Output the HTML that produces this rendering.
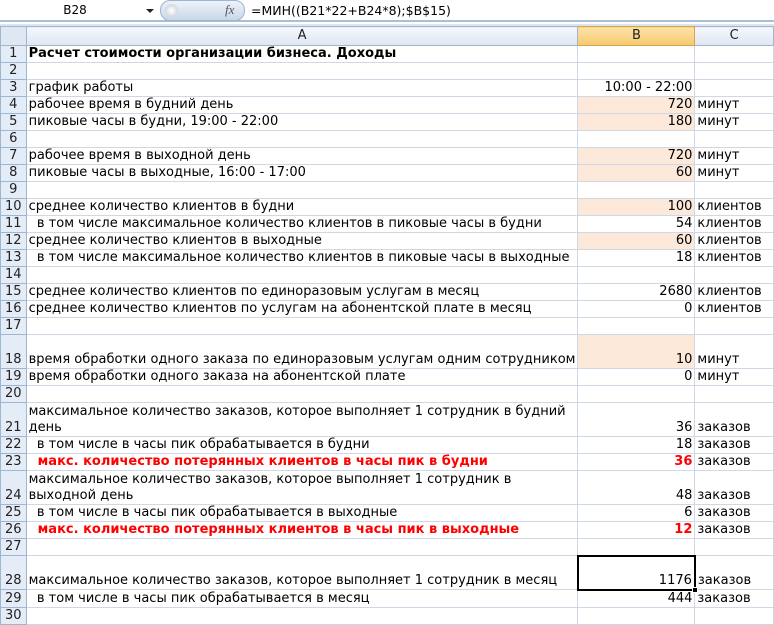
<!DOCTYPE html>
<html><head><meta charset="utf-8"><style>
*{margin:0;padding:0;box-sizing:border-box}
body{width:774px;height:611px;overflow:hidden;background:#fff;font-family:"DejaVu Sans","Liberation Sans",sans-serif;font-size:13px;color:#000;position:relative}
#fb{position:absolute;left:0;top:0;width:774px;height:22px;background:#fff;border-bottom:2px solid #a9bfd6}
#fb .nb{position:absolute;left:0;top:0;width:160px;height:21px;text-align:center;line-height:21px;padding-right:10px;font-size:12px}
#fb .arr{position:absolute;left:146px;top:9px;border-left:4px solid transparent;border-right:4px solid transparent;border-top:4px solid #222}
#fb .oval{position:absolute;left:160px;top:0;width:85px;height:21px;border-radius:10px;background:linear-gradient(#eef3fa,#c8d7ea);border:1px solid #9fb4cf}
#fb .oval i{position:absolute;left:4px;top:3px;width:13px;height:13px;border-radius:50%;background:radial-gradient(#fff,#c0c8d2);}
#fb .fx{position:absolute;left:225px;top:2px;font-family:"Liberation Serif",serif;font-style:italic;font-size:13px;color:#555}
#fb .f{position:absolute;left:251px;top:0;line-height:21px;font-size:12.5px}
#strip{position:absolute;left:0;top:24px;width:774px;height:2px;background:#dbe5f1}
table{position:absolute;left:0;top:26px;border-collapse:collapse;table-layout:fixed}
td{border:1px solid #d0d7e5;white-space:nowrap;overflow:visible;vertical-align:bottom;padding:0 2px;line-height:16px}
td.h{background:linear-gradient(#f4f7fb,#dfe7f2);border-color:#9eb6ce;text-align:center;color:#222;vertical-align:middle}
td.r{background:#e4ecf7;border-color:#9eb6ce;text-align:center;color:#222;padding:0}
td.hb{background:linear-gradient(#fbe2a8,#f8c96e);border-color:#d8a546}
td.b{text-align:right}
.o{background:#fde9d9}
.red{color:#f00;font-weight:bold}
.bold{font-weight:bold}
td.sel{border:2px solid #000;position:relative}
.handle{position:absolute;right:-4px;bottom:-4px;width:6px;height:6px;background:#000;border:1px solid #fff}
</style></head><body>
<div id="fb"><div class="nb">B28</div><div class="arr"></div><div class="oval"><i></i></div><div class="fx">fx</div><div class="f">=МИН((B21*22+B24*8);$B$15)</div></div>
<div id="strip"></div>
<table>
<colgroup><col style="width:26px"><col style="width:551px"><col style="width:118px"><col style="width:79px"></colgroup>
<tr style="height:19px"><td class="h" style="background:#dfe7f2"></td><td class="h">A</td><td class="h hb">B</td><td class="h">C</td></tr>
<tr style="height:17px"><td class="r">1</td><td class="bold">Расчет стоимости организации бизнеса. Доходы</td><td></td><td></td></tr>
<tr style="height:17px"><td class="r">2</td><td></td><td></td><td></td></tr>
<tr style="height:17px"><td class="r">3</td><td>график работы</td><td class="b">10:00 - 22:00</td><td></td></tr>
<tr style="height:17px"><td class="r">4</td><td>рабочее время в будний день</td><td class="b o">720</td><td>минут</td></tr>
<tr style="height:17px"><td class="r">5</td><td>пиковые часы в будни, 19:00 - 22:00</td><td class="b o">180</td><td>минут</td></tr>
<tr style="height:17px"><td class="r">6</td><td></td><td></td><td></td></tr>
<tr style="height:17px"><td class="r">7</td><td>рабочее время в выходной день</td><td class="b o">720</td><td>минут</td></tr>
<tr style="height:17px"><td class="r">8</td><td>пиковые часы в выходные, 16:00 - 17:00</td><td class="b o">60</td><td>минут</td></tr>
<tr style="height:17px"><td class="r">9</td><td></td><td></td><td></td></tr>
<tr style="height:17px"><td class="r">10</td><td>среднее количество клиентов в будни</td><td class="b o">100</td><td>клиентов</td></tr>
<tr style="height:17px"><td class="r">11</td><td>&nbsp; в том числе максимальное количество клиентов в пиковые часы в будни</td><td class="b">54</td><td>клиентов</td></tr>
<tr style="height:17px"><td class="r">12</td><td>среднее количество клиентов в выходные</td><td class="b o">60</td><td>клиентов</td></tr>
<tr style="height:17px"><td class="r">13</td><td>&nbsp; в том числе максимальное количество клиентов в пиковые часы в выходные</td><td class="b">18</td><td>клиентов</td></tr>
<tr style="height:17px"><td class="r">14</td><td></td><td></td><td></td></tr>
<tr style="height:17px"><td class="r">15</td><td>среднее количество клиентов по единоразовым услугам в месяц</td><td class="b">2680</td><td>клиентов</td></tr>
<tr style="height:17px"><td class="r">16</td><td>среднее количество клиентов по услугам на абонентской плате в месяц</td><td class="b">0</td><td>клиентов</td></tr>
<tr style="height:17px"><td class="r">17</td><td></td><td></td><td></td></tr>
<tr style="height:34px"><td class="r" style="vertical-align:bottom">18</td><td>время обработки одного заказа по единоразовым услугам одним сотрудником</td><td class="b o">10</td><td>минут</td></tr>
<tr style="height:17px"><td class="r">19</td><td>время обработки одного заказа на абонентской плате</td><td class="b">0</td><td>минут</td></tr>
<tr style="height:17px"><td class="r">20</td><td></td><td></td><td></td></tr>
<tr style="height:34px"><td class="r" style="vertical-align:bottom">21</td><td>максимальное количество заказов, которое выполняет 1 сотрудник в будний<br>день</td><td class="b">36</td><td>заказов</td></tr>
<tr style="height:17px"><td class="r">22</td><td>&nbsp; в том числе в часы пик обрабатывается в будни</td><td class="b">18</td><td>заказов</td></tr>
<tr style="height:17px"><td class="r">23</td><td class="red">&nbsp; макс. количество потерянных клиентов в часы пик в будни</td><td class="b red">36</td><td>заказов</td></tr>
<tr style="height:34px"><td class="r" style="vertical-align:bottom">24</td><td>максимальное количество заказов, которое выполняет 1 сотрудник в<br>выходной день</td><td class="b">48</td><td>заказов</td></tr>
<tr style="height:17px"><td class="r">25</td><td>&nbsp; в том числе в часы пик обрабатывается в выходные</td><td class="b">6</td><td>заказов</td></tr>
<tr style="height:17px"><td class="r">26</td><td class="red">&nbsp; макс. количество потерянных клиентов в часы пик в выходные</td><td class="b red">12</td><td>заказов</td></tr>
<tr style="height:17px"><td class="r">27</td><td></td><td></td><td></td></tr>
<tr style="height:34px"><td class="r" style="vertical-align:bottom">28</td><td>максимальное количество заказов, которое выполняет 1 сотрудник в месяц</td><td class="b sel">1176<div class="handle"></div></td><td>заказов</td></tr>
<tr style="height:17px"><td class="r">29</td><td>&nbsp; в том числе в часы пик обрабатывается в месяц</td><td class="b">444</td><td>заказов</td></tr>
<tr style="height:17px"><td class="r">30</td><td></td><td></td><td></td></tr>
</table>
</body></html>
